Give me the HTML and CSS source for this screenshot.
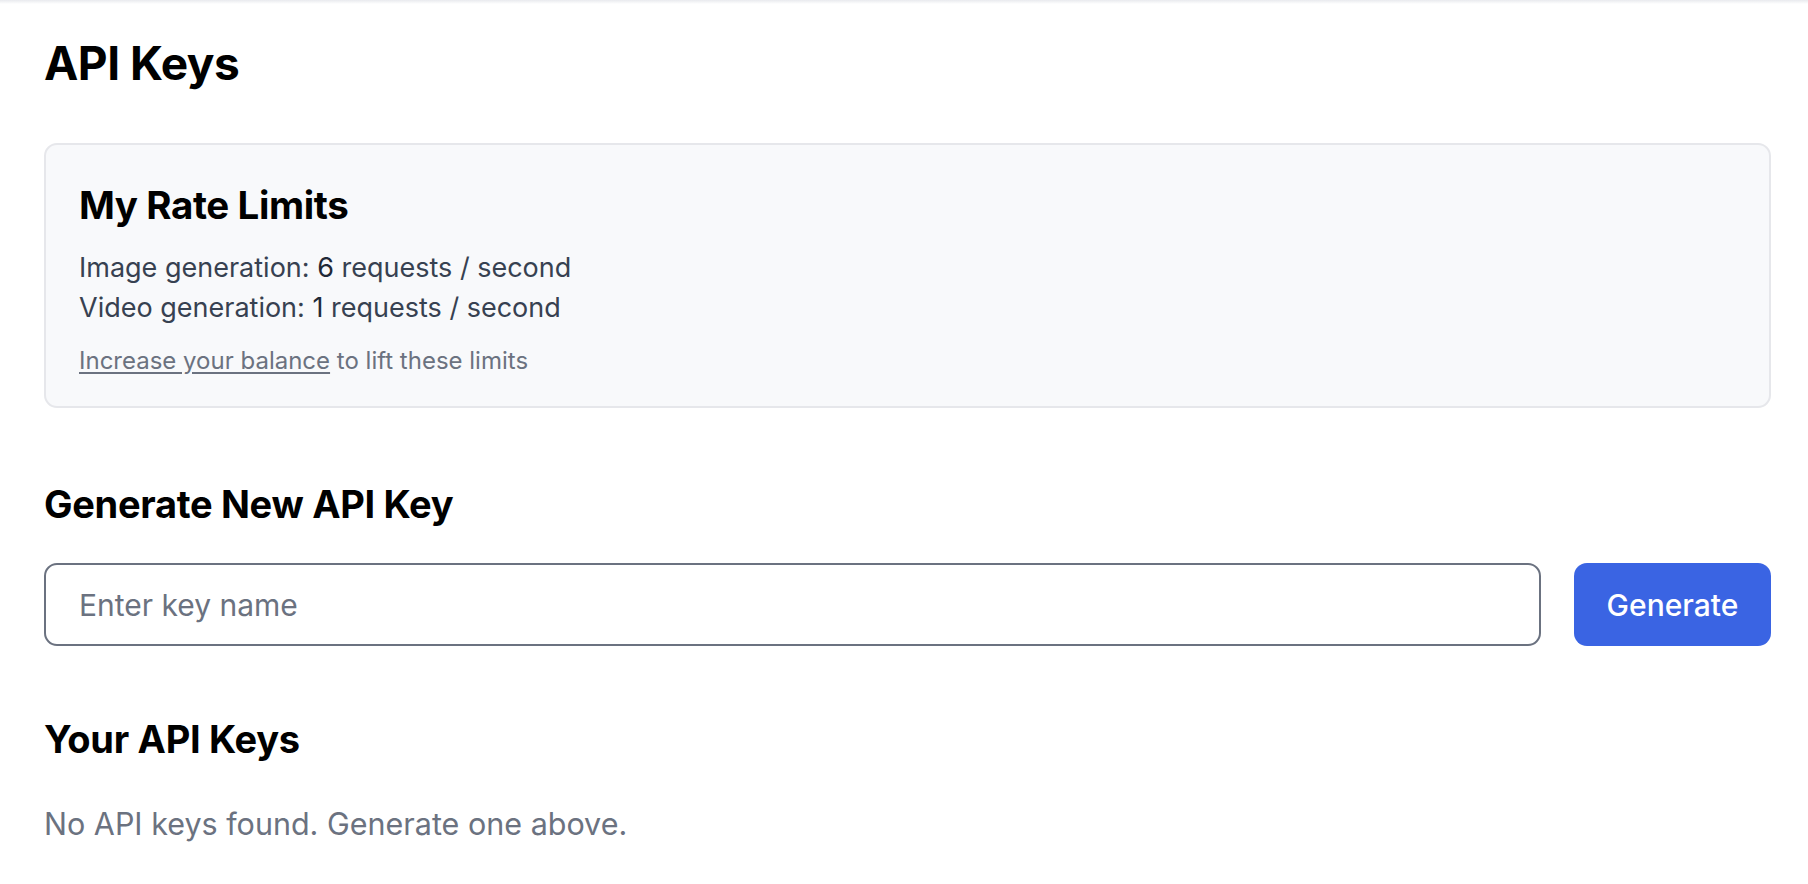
FILE: index.html
```html
<!DOCTYPE html>
<html lang="en">
<head>
<meta charset="utf-8">
<title>API Keys</title>
<link rel="stylesheet" href="styles.css">
</head>
<body>
<div class="topshade"></div>
<main class="page">
  <h1 class="title">API Keys</h1>

  <section class="card">
    <h2 class="card-title">My Rate Limits</h2>
    <div class="limits">
      <p class="limit">Image generation: <span class="num">6</span> requests / second</p>
      <p class="limit">Video generation: <span class="num">1</span> requests / second</p>
    </div>
    <p class="hint"><a class="hint-link" href="#">Increase your balance</a> to lift these limits</p>
  </section>

  <h2 class="section-title gen-title">Generate New API Key</h2>
  <form class="gen-row">
    <input class="key-input" type="text" placeholder="Enter key name">
    <button class="gen-btn" type="button">Generate</button>
  </form>

  <h2 class="section-title keys-title">Your API Keys</h2>
  <p class="empty">No API keys found. Generate one above.</p>
</main>
</body>
</html>
```

FILE: styles.css
```css
* { box-sizing: border-box; }
html, body { margin: 0; padding: 0; background: #ffffff; }
body {
  font-family: Inter, "Noto Sans", "Liberation Sans", sans-serif;
  color: #000;
  position: relative;
}
.topshade {
  height: 4px;
  background: linear-gradient(#e9eaee, #ffffff);
}
.page {
  padding: 31px 37px 40px 44px;
}
.title {
  margin: 0;
  font-size: 46px;
  line-height: 56px;
  font-weight: 700;
  letter-spacing: -0.5px;
}
.card {
  margin-top: 52px;
  background: #f8f9fb;
  border: 2px solid #e6e7eb;
  border-radius: 13px;
  padding: 34px 33px 28px 33px;
}
.card-title {
  margin: 0;
  font-size: 38.5px;
  line-height: 52px;
  font-weight: 700;
  letter-spacing: -0.4px;
}
.limits { margin-top: 17px; }
.limit {
  margin: 0;
  font-size: 27px;
  line-height: 40px;
  color: #374151;
}
.num { color: #1f2937; font-weight: 400; }
.hint {
  margin: 16px 0 0 0;
  font-size: 24px;
  line-height: 34px;
  color: #6b7280;
}
.hint-link { color: #6b7280; text-decoration: underline; text-underline-offset: 3px; }
.section-title {
  margin: 0;
  font-size: 38px;
  line-height: 44px;
  font-weight: 700;
  letter-spacing: -0.3px;
}
.gen-title { margin-top: 74px; }
.gen-row {
  display: flex;
  gap: 33px;
  margin-top: 37px;
}
.key-input {
  flex: 1;
  height: 83px;
  border: 2px solid #6b7280;
  border-radius: 13px;
  padding: 0 33px;
  font-family: inherit;
  font-size: 30px;
  color: #111827;
  background: #fff;
  outline: none;
}
.key-input::placeholder { color: #6b7280; }
.gen-btn {
  width: 197px;
  height: 83px;
  border: none;
  border-radius: 13px;
  background: #3a64e3;
  color: #ffffff;
  font-family: inherit;
  font-size: 30px;
  font-weight: 500;
}
.keys-title { margin-top: 71px; }
.empty {
  margin: 43px 0 0 0;
  font-size: 30.5px;
  line-height: 40px;
  color: #6b7280;
}
```
